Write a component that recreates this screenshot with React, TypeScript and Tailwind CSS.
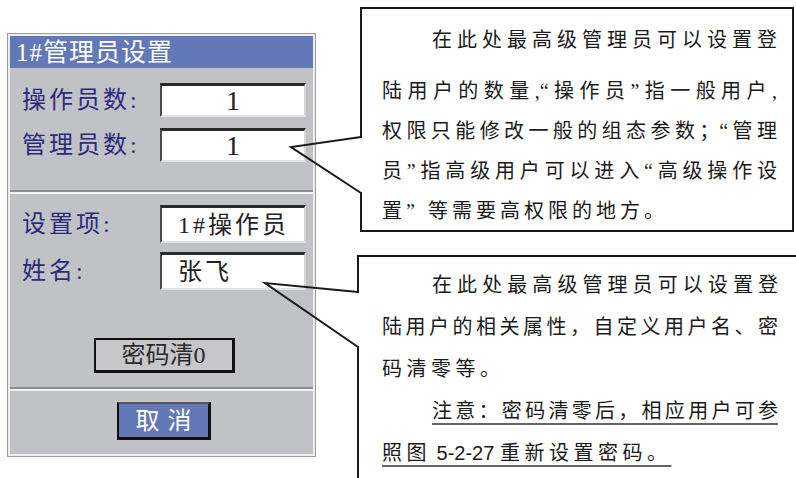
const serif = "font-['Liberation_Serif','Noto_Sans_CJK_SC',serif]";

function Field({ label, value, align = 'center', tall = false }: { label: string; value: string; align?: 'center' | 'left'; tall?: boolean }) {
  return (
    <div className="flex items-center">
      <div className="w-[138px] text-[24px] tracking-[3px] text-[#2d2a7e] leading-none">{label}</div>
      <div
        className={`w-[146px] ${tall ? 'h-[38px]' : 'h-[34px]'} bg-white border-t-[3px] border-l-2 border-r-2 border-b-2 border-t-[#2a2a2a] border-l-[#4a4a4a] border-r-[#d6d6d6] border-b-[#e2e2e2] flex items-center leading-none text-[#222] ${
          align === 'center' ? 'justify-center text-[28px]' : 'pl-[16px] tracking-[3px] text-[24px]'
        }`}
      >
        {value}
      </div>
    </div>
  );
}

function Separator() {
  return <div className="h-[4px] border-t-2 border-b-2 border-t-[#8e8e92] border-b-[#f2f2f2]" />;
}

function Panel() {
  return (
    <div className={`shrink-0 ml-[7px] mt-[33px] w-[309px] h-[424px] border border-[#9c9c9c] bg-[#eeeeee] p-[2px] flex flex-col ${serif}`}>
      <div className="h-[32px] bg-[#6378b7] text-white text-[25px] leading-none flex items-center pl-[6px] tracking-[1px]">
        1#管理员设置
      </div>
      <div className="h-[122px] bg-[#c1c2c6] pl-[12px] pt-[15px] flex flex-col gap-[11px]">
        <Field label="操作员数:" value="1" />
        <Field label="管理员数:" value="1" />
      </div>
      <Separator />
      <div className="h-[193px] bg-[#c1c2c6] pl-[12px] pt-[11px] flex flex-col">
        <div className="flex flex-col gap-[9px]">
          <Field label="设置项:" value="1#操作员" align="left" tall />
          <Field label="姓名:" value="张飞" align="left" tall />
        </div>
        <div className="mt-[48px] flex justify-center pr-[7px]">
          <div className="w-[141px] h-[35px] bg-[#c7c7c9] border-2 border-r-[3px] border-b-[3px] border-[#111] flex items-center justify-center text-[24px] leading-none text-[#2a2a2a]">
            密码清0
          </div>
        </div>
      </div>
      <Separator />
      <div className="flex-1 bg-[#c1c2c6] flex justify-center pt-[11px] pl-[5px]">
        <div className="w-[94px] h-[38px] bg-[#6378b7] border-2 border-r-[3px] border-b-[3px] border-[#111] border-t-[#555] flex items-center justify-center text-white text-[24px] leading-none tracking-[8px] pl-[8px]">
          取消
        </div>
      </div>
    </div>
  );
}

const line = 'text-justify [text-align-last:justify]';

export default function App() {
  return (
    <div className="relative w-[796px] h-[478px] overflow-hidden bg-white flex" lang="zh-CN">
      <Panel />
      <div className={`shrink-0 ml-[41px] flex flex-col text-[20px] text-[#1a1a1a] ${serif}`}>
        <div className="shrink-0 ml-[3px] mt-[7px] w-[434px] h-[225px] border-2 border-[#1a1a1a] pl-[20px] pr-[15px] pt-[11px] leading-[40px]">
          <div className={`${line} pl-[50px] mb-[11px]`}>在此处最高级管理员可以设置登</div>
          <div className={line}>陆用户的数量,“操作员”指一般用户,</div>
          <div className={line}>权限只能修改一般的组态参数；“管理</div>
          <div className={line}>员”指高级用户可以进入“高级操作设</div>
          <div className="tracking-[4px]">置” 等需要高权限的地方。</div>
        </div>
        <div className="shrink-0 mt-[23px] w-[445px] h-[240px] border-2 border-[#1a1a1a] pl-[23px] pr-[22px] pt-[7px] leading-[42px]">
          <div className={`${line} pl-[50px]`}>在此处最高级管理员可以设置登</div>
          <div className={line}>陆用户的相关属性，自定义用户名、密</div>
          <div className="tracking-[4.5px]">码清零等。</div>
          <div className={`${line} pl-[50px]`}>
            <span className="underline decoration-2 decoration-[#666] underline-offset-[5px]">注意：密码清零后，相应用户可参</span>
          </div>
          <div className="tracking-[4.5px]">
            <span className="underline decoration-2 decoration-[#666] underline-offset-[5px]">
              照图<span className="font-['Liberation_Sans',sans-serif] tracking-normal"> 5-2-27 </span>重新设置密码。
            </span>
          </div>
        </div>
      </div>
      <svg className="absolute left-0 top-0 pointer-events-none" width="796" height="478" viewBox="0 0 796 478">
        <rect x="359" y="138" width="5" height="54" fill="white" />
        <polyline points="361,137 291,147 361,193" fill="none" stroke="#1a1a1a" strokeWidth="2" />
        <rect x="356" y="293" width="5" height="53" fill="white" />
        <polyline points="358,292 265,283 358,347" fill="none" stroke="#1a1a1a" strokeWidth="2" />
      </svg>
    </div>
  );
}
